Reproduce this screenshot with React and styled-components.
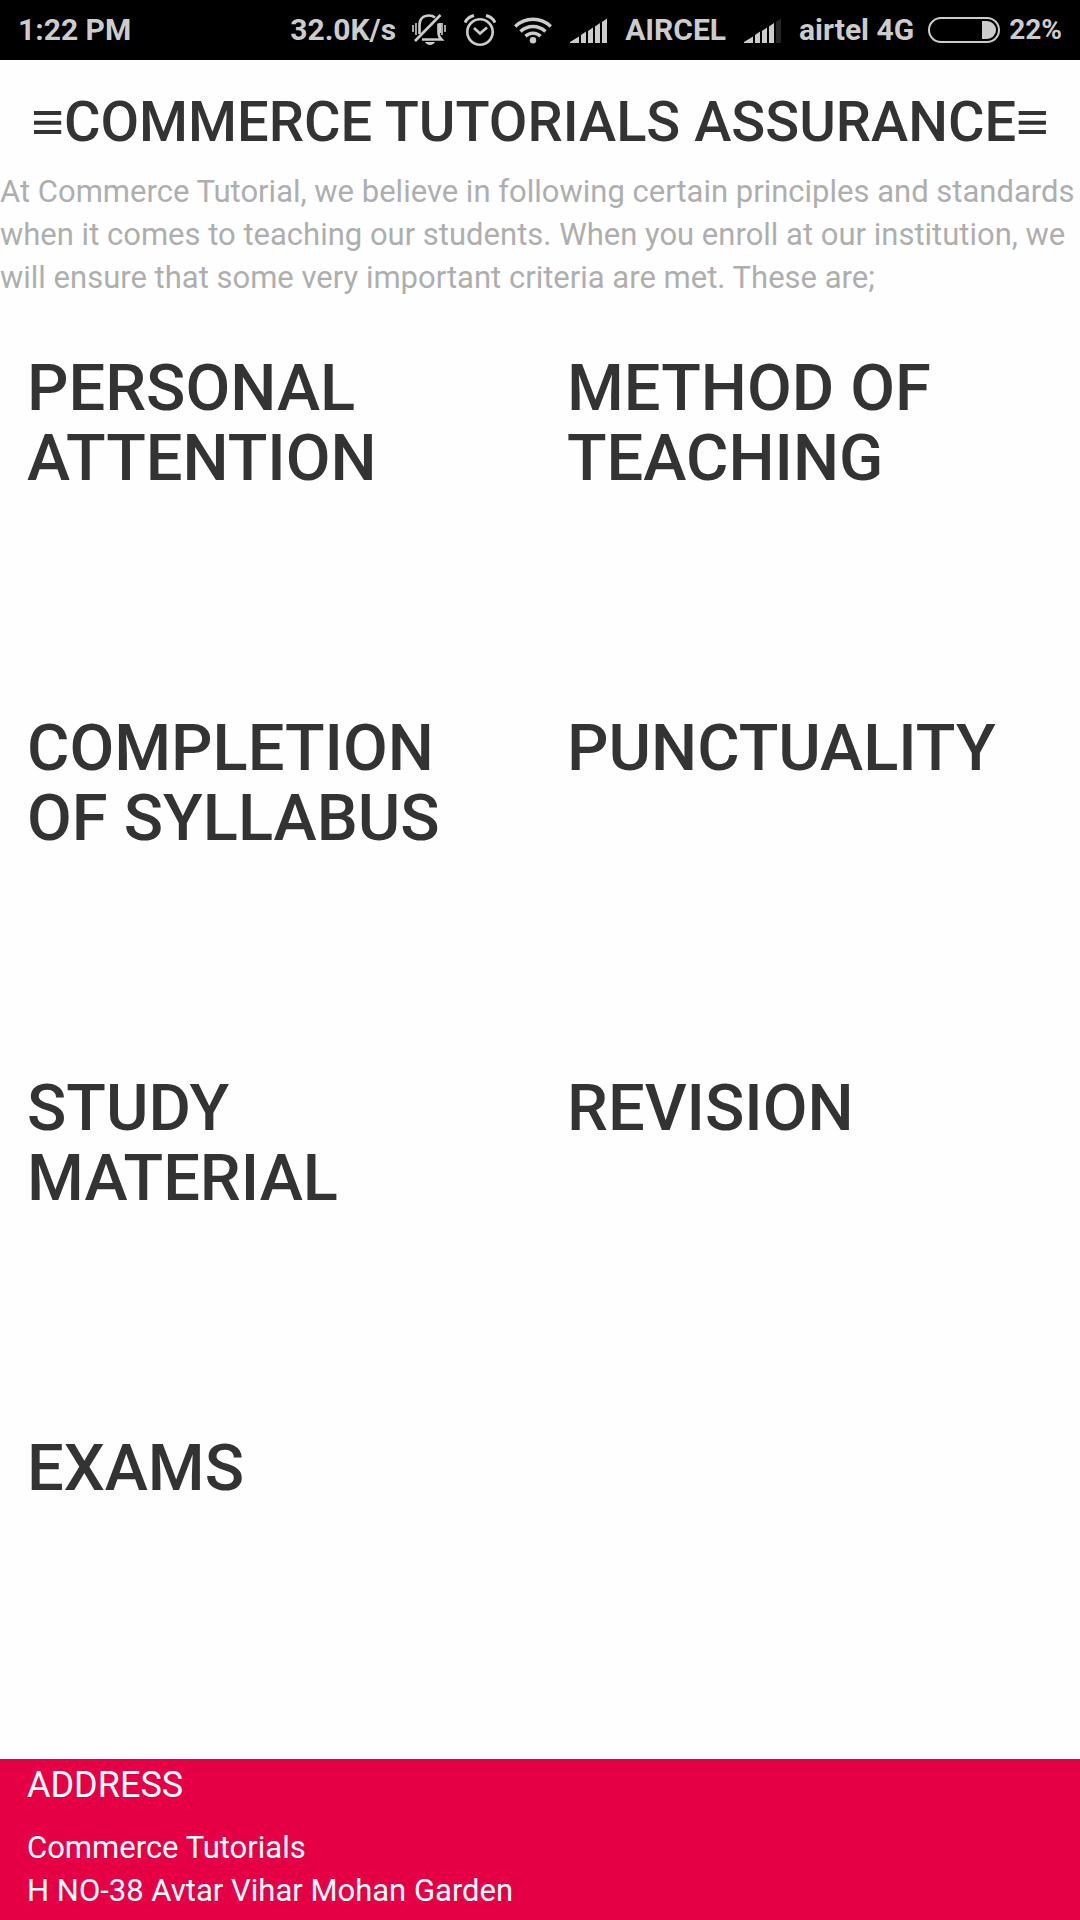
import React from "react";
import styled, { createGlobalStyle } from "styled-components";

const GlobalStyle = createGlobalStyle`
  * { box-sizing: border-box; }
  body {
    margin: 0;
    background: #fefefe;
    color: #333333;
    font-family: Roboto, "Noto Sans", sans-serif;
    font-size: 31px;
    line-height: 43px;
  }
`;

const Page = styled.div`
  display: flex;
  flex-direction: column;
  min-height: 100vh;
`;

const StatusBar = styled.header`
  display: flex;
  align-items: center;
  justify-content: space-between;
  height: 60px;
  padding: 0 18px;
  background: #000000;
  color: #cccccc;
  font-size: 30px;
  font-weight: 700;
  line-height: 36px;
  white-space: nowrap;
`;

const StatusGroup = styled.div`
  display: flex;
  align-items: center;
  gap: ${(p) => p.$gap}px;
`;

const BatteryLevel = styled.span`
  font-size: 28px;
`;

const Icon = styled.svg`
  display: block;
  flex: none;
`;

const Main = styled.main`
  padding-top: 31px;
`;

const Title = styled.h1`
  margin: 0 0 17px;
  font-size: 56px;
  font-weight: 500;
  line-height: 62px;
  text-align: center;
`;

const TitleMark = styled.span`
  font-family: "Liberation Sans", sans-serif;
  font-weight: 400;
  line-height: 1;
`;

const Intro = styled.p`
  margin: 0 0 54px;
  color: #aeaeae;
`;

const Principles = styled.section`
  display: grid;
  grid-template-columns: 1fr 1fr;
  grid-auto-rows: minmax(326px, auto);
  row-gap: 34px;
`;

const Principle = styled.article`
  padding: 0 27px;
`;

const PrincipleTitle = styled.h2`
  margin: 0;
  font-size: 65px;
  font-weight: 500;
  line-height: 70px;
`;

const Footer = styled.footer`
  flex: 1;
  padding: 7px 27px 0;
  background: #e50046;
  color: #ffffff;
`;

const FooterTitle = styled.h3`
  margin: 0 0 22px;
  font-size: 36px;
  font-weight: 400;
  line-height: 38px;
`;

const Address = styled.address`
  font-style: normal;
`;

const principles = [
  "PERSONAL ATTENTION",
  "METHOD OF TEACHING",
  "COMPLETION OF SYLLABUS",
  "PUNCTUALITY",
  "STUDY MATERIAL",
  "REVISION",
  "EXAMS",
];

function SilentIcon() {
  return (
    <Icon width="34" height="32" viewBox="0 0 34 32" fill="none" stroke="#cccccc" strokeWidth="2" aria-hidden="true">
      <path d="M1 11v7M4 9v12M30 9v12M33 11v7" strokeWidth="1.6" />
      <path d="M7.500 20V11C7.500 5 11.500 1.500 17 1.500c2.500 0 4.500.7 6 2M26.500 9.500v9c0 3 1 5 3 7H10M28 9v10" strokeWidth="2.600" />
      <path d="M28.500 1 3 27" strokeWidth="2.600" />
      <path d="M13 28h10c-1.500 2.200-3 3-5 3s-3.500-.8-5-3z" fill="#cccccc" stroke="none" />
    </Icon>
  );
}

function AlarmIcon() {
  return (
    <Icon width="32" height="32" viewBox="0 0 32 32" fill="none" stroke="#cccccc" strokeWidth="2.600" aria-hidden="true">
      <circle cx="16" cy="18" r="12.700" />
      <path d="M10 14l6 5.500 7-6" />
      <path d="M1 8.500C2.500 5.500 6 2.500 10 1.500M31 8.500C29.500 5.500 26 2.500 22 1.500" strokeWidth="3" />
    </Icon>
  );
}

function WifiIcon() {
  return (
    <Icon width="38" height="28" viewBox="0 0 38 28" fill="none" stroke="#cccccc" strokeWidth="3.400" aria-hidden="true">
      <path d="M1.200 10.500a25.500 25.500 0 0 1 35.600 0" />
      <path d="M6.500 15.500a18 18 0 0 1 25 0" />
      <path d="M11.500 20.200a10.800 10.800 0 0 1 15 0" />
      <circle cx="19" cy="24.300" r="3.200" fill="#cccccc" stroke="none" />
    </Icon>
  );
}

function SignalIcon({ bars }) {
  const shapes = [
    "M0 25v-1l9-5.500V25z",
    "M11 25v-8l5-3.500V25z",
    "M18 25V13l5-3.500V25z",
    "M25 25V8.500L30 5v20z",
    "M32 25V4l5-3.500V25z",
  ];
  return (
    <Icon width="37" height="25" viewBox="0 0 37 25" aria-hidden="true">
      {shapes.map((d, i) => (
        <path key={d} d={d} fill={i < bars ? "#cccccc" : "#262626"} />
      ))}
    </Icon>
  );
}

function BatteryIcon() {
  return (
    <Icon width="72" height="26" viewBox="0 0 72 26" aria-hidden="true">
      <rect x="1" y="1" width="70" height="24" rx="12" fill="none" stroke="#cccccc" strokeWidth="2" />
      <path d="M54 4h5a9 9 0 0 1 0 18h-5z" fill="#cccccc" />
    </Icon>
  );
}

export default function App() {
  return (
    <Page>
      <GlobalStyle />
      <StatusBar>
        <span>1:22 PM</span>
        <StatusGroup $gap={18}>
          <StatusGroup $gap={16}>
            <span>32.0K/s</span>
            <SilentIcon />
          </StatusGroup>
          <AlarmIcon />
          <WifiIcon />
          <SignalIcon bars={5} />
          <span>AIRCEL</span>
          <SignalIcon bars={4} />
          <StatusGroup $gap={14}>
            <span>airtel 4G</span>
            <StatusGroup $gap={9}>
              <BatteryIcon />
              <BatteryLevel>22%</BatteryLevel>
            </StatusGroup>
          </StatusGroup>
        </StatusGroup>
      </StatusBar>
      <Main>
        <Title>
          <TitleMark>≡</TitleMark>COMMERCE TUTORIALS ASSURANCE<TitleMark>≡</TitleMark>
        </Title>
        <Intro>
          At Commerce Tutorial, we believe in following certain principles and standards when it comes to
          teaching our students. When you enroll at our institution, we will ensure that some very important
          criteria are met. These are;
        </Intro>
        <Principles>
          {principles.map((name) => (
            <Principle key={name}>
              <PrincipleTitle>{name}</PrincipleTitle>
            </Principle>
          ))}
        </Principles>
      </Main>
      <Footer>
        <FooterTitle>ADDRESS</FooterTitle>
        <Address>
          Commerce Tutorials
          <br />
          H NO-38 Avtar Vihar Mohan Garden
        </Address>
      </Footer>
    </Page>
  );
}
